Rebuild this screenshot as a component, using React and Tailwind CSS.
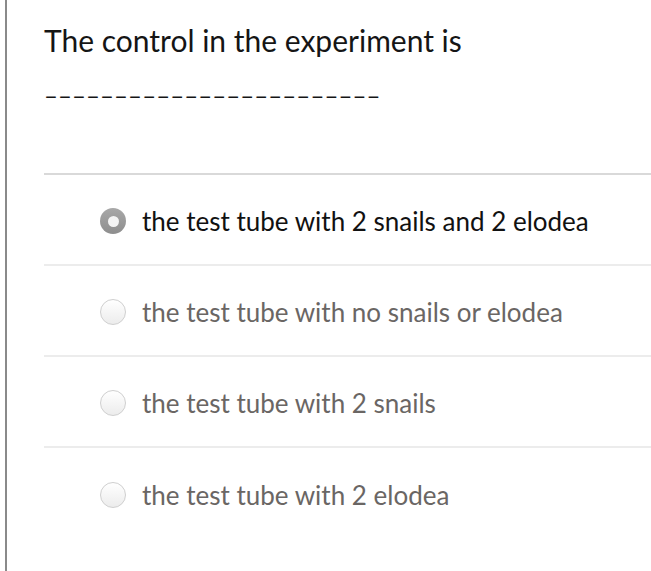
export default function App() {
	const options = [
		{ label: 'the test tube with 2 snails and 2 elodea', selected: true },
		{ label: 'the test tube with no snails or elodea' },
		{ label: 'the test tube with 2 snails' },
		{ label: 'the test tube with 2 elodea' },
	]

	return (
		<div className="w-[651px] h-[571px] bg-white overflow-hidden pl-[5px]" style={{ fontFamily: 'Lato, "Open Sans", sans-serif' }}>
			<div className="h-full border-l-2 border-[#8a8a8a] pl-[37px]">
				<div className="pt-[20px] h-[173px]">
					<p className="text-[30px] leading-[40px] text-[#151515]">The control in the experiment is</p>
					<p className="mt-[19px] text-[24px] leading-[32px] text-[#151515] tracking-[0.1px]">––––––––––––––––––––––––</p>
				</div>
				<ul className="border-t-2 border-[#d9d9d9]">
					{options.map((o, i) => (
						<li
							key={i}
							className={`h-[91px] flex items-center pl-[56px] pt-[3px] gap-[16px] ${i < options.length - 1 ? 'border-b-2 border-[#ececec]' : ''}`}
						>
							{o.selected ? (
								<span className="w-[26px] h-[26px] rounded-full bg-gradient-to-b from-[#a8a8a8] to-[#8e8e8e] flex items-center justify-center shrink-0">
									<span className="w-[11px] h-[11px] rounded-full bg-[#f4f4f4]" />
								</span>
							) : (
								<span className="w-[26px] h-[26px] rounded-full border border-[#cfcfcf] bg-gradient-to-b from-[#ffffff] to-[#ececec] shrink-0" />
							)}
							<span className={`text-[26px] ${o.selected ? 'text-[#111111]' : 'text-[#6a6664]'}`}>{o.label}</span>
						</li>
					))}
				</ul>
			</div>
		</div>
	)
}
